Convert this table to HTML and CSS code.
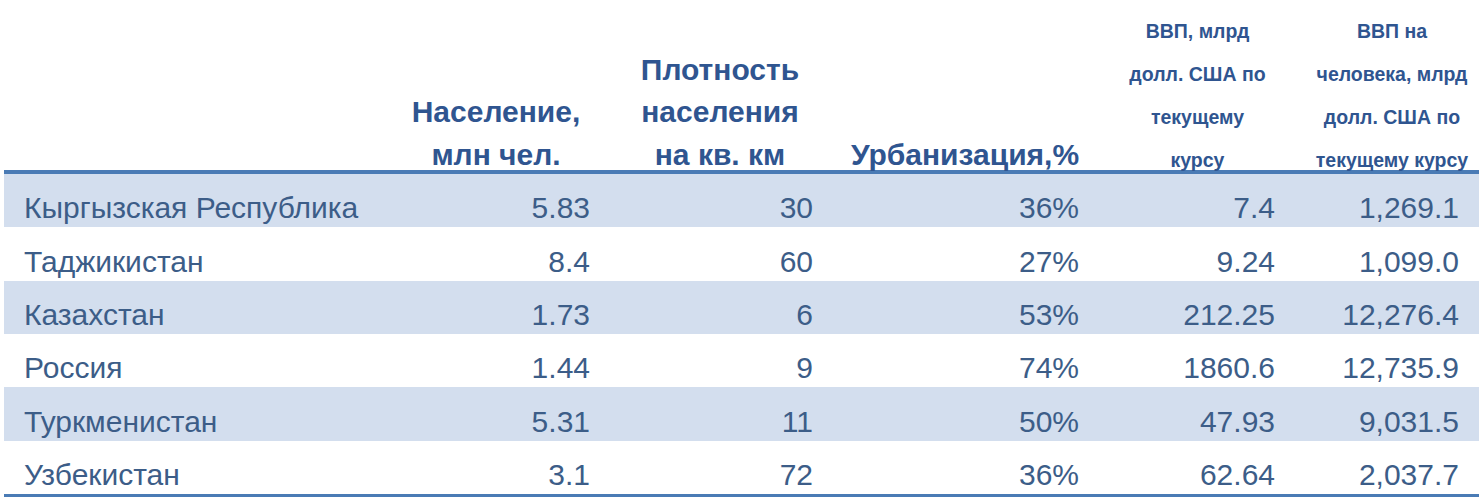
FILE: index.html
```html
<!DOCTYPE html>
<html lang="ru">
<head>
<meta charset="utf-8">
<title>Страны</title>
<link rel="stylesheet" href="styles.css">
</head>
<body>
<table class="data">
  <colgroup>
    <col class="c0"><col class="c1"><col class="c2"><col class="c3"><col class="c4"><col class="c5">
  </colgroup>
  <thead>
    <tr>
      <th class="h-name"></th>
      <th class="big"><div class="hb">Население,<br>млн чел.</div></th>
      <th class="big"><div class="hb">Плотность<br>населения<br>на кв. км</div></th>
      <th class="big"><div class="hb">Урбанизация,%</div></th>
      <th class="small"><div class="hs">ВВП, млрд<br>долл. США по<br>текущему<br>курсу</div></th>
      <th class="small"><div class="hs">ВВП на<br>человека, млрд<br>долл. США по<br>текущему курсу</div></th>
    </tr>
  </thead>
  <tbody>
    <tr class="shade"><td class="name">Кыргызская Республика</td><td class="n1">5.83</td><td class="n2">30</td><td class="n3">36%</td><td class="n4">7.4</td><td class="n5">1,269.1</td></tr>
    <tr><td class="name">Таджикистан</td><td class="n1">8.4</td><td class="n2">60</td><td class="n3">27%</td><td class="n4">9.24</td><td class="n5">1,099.0</td></tr>
    <tr class="shade"><td class="name">Казахстан</td><td class="n1">1.73</td><td class="n2">6</td><td class="n3">53%</td><td class="n4">212.25</td><td class="n5">12,276.4</td></tr>
    <tr><td class="name">Россия</td><td class="n1">1.44</td><td class="n2">9</td><td class="n3">74%</td><td class="n4">1860.6</td><td class="n5">12,735.9</td></tr>
    <tr class="shade"><td class="name">Туркменистан</td><td class="n1">5.31</td><td class="n2">11</td><td class="n3">50%</td><td class="n4">47.93</td><td class="n5">9,031.5</td></tr>
    <tr><td class="name">Узбекистан</td><td class="n1">3.1</td><td class="n2">72</td><td class="n3">36%</td><td class="n4">62.64</td><td class="n5">2,037.7</td></tr>
  </tbody>
</table>
</body>
</html>
```
FILE: styles.css
```css
html, body {
  margin: 0;
  padding: 0;
  background: #ffffff;
}
body {
  padding-left: 4px;
  font-family: "Liberation Sans", Arial, sans-serif;
}
.data {
  border-collapse: collapse;
  width: 1475px;
  table-layout: fixed;
}
.c0 { width: 388px; }
.c1 { width: 208px; }
.c2 { width: 240px; }
.c3 { width: 250px; }
.c4 { width: 215px; }
.c5 { width: 174px; }

.data thead th {
  padding: 0;
  height: 170px;
  vertical-align: bottom;
  text-align: center;
  color: #2f5590;
  font-weight: bold;
  border-bottom: 4px solid #4a7bb5;
}
.hb {
  font-size: 30px;
  line-height: 42.5px;
  margin-bottom: -6px;
}
.hs {
  font-size: 19.5px;
  line-height: 43px;
  margin-bottom: -12px;
  white-space: nowrap;
}
.data tbody td {
  padding: 0 0 3px 0;
  height: 50.33px;
  vertical-align: bottom;
  font-size: 30px;
  line-height: 33px;
  color: #3c5d88;
  text-align: right;
  white-space: nowrap;
}
.data tbody tr:last-child td {
  border-bottom: 3px solid #4a7bb5;
}
.shade td {
  background: #d3deee;
}
.data tbody td.name {
  text-align: left;
  padding-left: 20px;
}
.data tbody td.n1 { padding-right: 10px; }
.data tbody td.n2 { padding-right: 27px; }
.data tbody td.n3 { padding-right: 11px; }
.data tbody td.n4 { padding-right: 30px; }
.data tbody td.n5 { padding-right: 20px; }
```
